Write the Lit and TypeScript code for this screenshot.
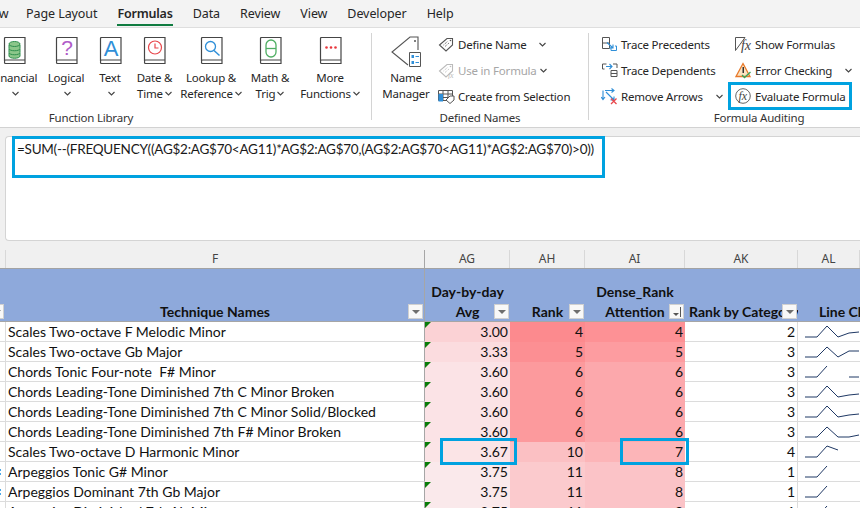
import { LitElement, css, html, svg } from "lit"
import { customElement } from "lit/decorators.js"

const book = (inner: unknown) => html`<svg class="book" width="23" height="29" viewBox="0 0 23 29" fill="none">
  <path d="M1.500 24V1.500q0-1 1-1h19.500v26H2.500q-1 0-1-1.500q0-2 1-2h19.500" stroke="#454545" stroke-width="1.200"/>
  ${inner}
</svg>`

const coins = svg`
  <g fill="#8cc68a" stroke="#2f8f4e" stroke-width="1">
    <path d="M6 16v3c0 3 11 3 11 0v-3z"/>
    <path d="M6 12v3.500c0 3 11 3 11 0V12z"/>
    <path d="M6 8v3.500c0 3 11 3 11 0V8z"/>
    <ellipse cx="11.500" cy="7" rx="5.500" ry="2.500"/>
  </g>`
const question = svg`<text x="12" y="18" font-family="Liberation Sans" font-size="21" fill="#b05cc8" text-anchor="middle">?</text>`
const letterA = svg`<text x="12" y="19" font-family="Liberation Sans" font-size="22" fill="#2f8fd8" text-anchor="middle">A</text>`
const clock = svg`
  <circle cx="12" cy="10.500" r="6.500" stroke="#e8474c" stroke-width="1.200"/>
  <path d="M12 6.500v4.500h3.500" stroke="#e8474c" stroke-width="1.200"/>`
const lens = svg`
  <circle cx="10.500" cy="9.500" r="5" stroke="#2f8fd8" stroke-width="1.300"/>
  <path d="M14 13.500l5.500 5" stroke="#2f8fd8" stroke-width="1.500"/>`
const theta = svg`
  <rect x="7" y="3" width="10" height="17" rx="5" stroke="#4fae63" stroke-width="1.300"/>
  <path d="M7 11.500h10" stroke="#4fae63" stroke-width="1.300"/>`
const dots = svg`
  <circle cx="7.500" cy="10.500" r="1.300" fill="#e8363c"/>
  <circle cx="12" cy="10.500" r="1.300" fill="#e8363c"/>
  <circle cx="16.500" cy="10.500" r="1.300" fill="#e8363c"/>`

const tagIcon = (stroke: string) => svg`
  <path d="M1.500 9L9 2.500h5.500V9L8 15z" stroke="${stroke}" stroke-width="1.100" fill="none"/>
  <path d="M5.500 9l4-3.500M7 10.500l4-3.500" stroke="${stroke}" stroke-width="1" stroke-dasharray="1 1"/>
  <circle cx="12.500" cy="4.500" r=".8" fill="${stroke}"/>`

const icons: Record<string, unknown> = {
  define: tagIcon("#555"),
  use: svg`${tagIcon("#bbb")}<text x="10" y="16" font-family="Liberation Serif" font-style="italic" font-size="8" fill="#bbb">fx</text>`,
  create: svg`
    <path d="M.5 2.500h14v10h-14zM.5 6h14M.5 9.500h14M5 2.500v10M10 2.500v10" stroke="#555" fill="none"/>
    <path d="M.5 6H5v7.500H.5z" fill="#2f8fd8"/>
    <path d="M8 12l4-4h4v4l-4 3.500z" fill="#fff" stroke="#555"/>`,
  precedents: svg`
    <path d="M1.500 1.500h7v11h-7zM1.500 7h7" stroke="#555" fill="none"/>
    <path d="M6 6.500l6 5.500M12 8.500V12H8.500" stroke="#2f8fd8" stroke-width="1.100" fill="none"/>
    <path d="M10 11v3.500h5.500V10H14" stroke="#2f8fd8" fill="none"/>`,
  dependents: svg`
    <path d="M1.500 2h4M1.500 2v5h2" stroke="#555" fill="none"/>
    <path d="M5 4.500h6M8.500 2l2.500 2.500L8.500 7" stroke="#2f8fd8" stroke-width="1.100" fill="none"/>
    <path d="M10 8.500h6v6h-6zM10 11.500h6" stroke="#555" fill="none"/>
    <path d="M12 2h4v4" stroke="#555" fill="none"/>`,
  remove: svg`
    <path d="M2 11V2.500M.2 9l1.800 2.500L4 9M4 2.500h9M10.500 .5L13 2.500l-2.500 2M5 4l8 8M13 8.500V12H9.500" stroke="#2f8fd8" stroke-width="1.100" fill="none"/>
    <path d="M10 10.500l5.500 5.500M15.500 10.500L10 16" stroke="#e8474c" stroke-width="1.300"/>`,
  show: svg`
    <path d="M.5 14.500L10 1.500H.5v13" stroke="#555" fill="none"/>
    <text x="6" y="14" font-family="Liberation Serif" font-style="italic" font-size="14" fill="#444">fx</text>`,
  error: svg`
    <path d="M8 1.500L15 14.500H1z" fill="#fbe3c0" stroke="#e8792b" stroke-width="1.300"/>
    <path d="M7.500 5h1.500v6H7.500z" fill="#333"/>
    <path d="M7 13l2.500 2.500L15.500 10" stroke="#3aa35a" stroke-width="1.300" fill="none"/>`,
  evaluate: svg`
    <circle cx="8" cy="8" r="7.300" stroke="#666" fill="none"/>
    <text x="3.500" y="12" font-family="Liberation Serif" font-style="italic" font-size="12" fill="#444">fx</text>`,
}

const chevron = html`<svg class="chev" width="7" height="5" viewBox="0 0 7 5"><path d="M.5 1L3.500 4l3-3" fill="none" stroke="#444" stroke-width="1.100"/></svg>`

const small = (icon: string, label: string, chev = false, off = false) => html`
  <div class="small ${off ? "off" : ""}">
    <svg class="glyph" width="17" height="17" viewBox="0 0 17 17">${icons[icon]}</svg>
    <span>${label}</span>
    ${chev ? chevron : ""}
  </div>`

const filterBtn = html`<span class="filter"><i></i></span>`

interface Row {
  name: string
  avg: string
  rank: number
  dense: number
  cat: number
  colors: [string, string, string]
  spark: string[]
  dotted?: boolean
}

const up = "8,15 20,15 30,4"
const rows: Row[] = [
  { name: "Scales Two-octave F Melodic Minor", avg: "3.00", rank: 4, dense: 4, cat: 2, colors: ["#fbd2d5", "#fc8a8e", "#fd9195"], spark: ["8,15 20,15 30,4 41,15 52,11 62,10"] },
  { name: "Scales Two-octave Gb Major", avg: "3.33", rank: 5, dense: 5, cat: 3, colors: ["#fbdcdf", "#fc8f93", "#fd9ca0"], spark: ["8,15 20,15 30,5 41,15 52,9 62,9"] },
  { name: "Chords Tonic Four-note  F# Minor", avg: "3.60", rank: 6, dense: 6, cat: 3, colors: ["#fbe3e6", "#fc9a9d", "#fca8ac"], spark: [up, "52,15 62,15"] },
  { name: "Chords Leading-Tone Diminished 7th C Minor Broken", avg: "3.60", rank: 6, dense: 6, cat: 3, colors: ["#fbe3e6", "#fc9a9d", "#fca8ac"], spark: ["8,15 20,15 30,4 41,15 52,13 62,12"] },
  { name: "Chords Leading-Tone Diminished 7th C Minor Solid/Blocked", avg: "3.60", rank: 6, dense: 6, cat: 3, colors: ["#fbe3e6", "#fc9a9d", "#fca8ac"], spark: ["8,15 20,15 30,4 41,15 52,13 62,12"] },
  { name: "Chords Leading-Tone Diminished 7th F# Minor Broken", avg: "3.60", rank: 6, dense: 6, cat: 3, colors: ["#fbe3e6", "#fc9a9d", "#fca8ac"], spark: ["8,15 20,15 30,5 41,15 52,15 62,13"] },
  { name: "Scales Two-octave D Harmonic Minor", avg: "3.67", rank: 10, dense: 7, cat: 4, colors: ["#fbe4e6", "#fbc0c3", "#fcb5b8"], spark: ["8,15 20,15 30,4 41,8"] },
  { name: "Arpeggios Tonic G# Minor", avg: "3.75", rank: 11, dense: 8, cat: 1, colors: ["#fae9eb", "#fbcacd", "#fbc3c7"], spark: [up], dotted: true },
  { name: "Arpeggios Dominant 7th Gb Major", avg: "3.75", rank: 11, dense: 8, cat: 1, colors: ["#fae9eb", "#fbcacd", "#fbc3c7"], spark: [up], dotted: true },
  { name: "Arpeggios Diminished 7th Ab Minor", avg: "3.75", rank: 11, dense: 8, cat: 1, colors: ["#fae9eb", "#fbcacd", "#fbc3c7"], spark: [up] },
]

@customElement("app-root")
export class AppRoot extends LitElement {
  static styles = css`
    :host {
      display: block;
      width: 860px;
      height: 508px;
      overflow: hidden;
      position: relative;
      background: #f0f0f0;
      font-family: "Noto Sans", sans-serif;
      color: #262626;
    }
    .tabs {
      height: 27px;
      display: flex;
      gap: 20px;
      padding-left: 26px;
      background: #f3f3f3;
      font-size: 12.500px;
      letter-spacing: -.08px;
      line-height: 27px;
      border-bottom: 1px solid #dedede;
    }
    .tabs span { white-space: nowrap; }
    .tabs .cut { margin-left: -48px; width: 26px; text-align: right; margin-right: -20px; padding-right: 22px; }
    .tabs .active { font-weight: 600; position: relative; letter-spacing: -.2px; }
    .tabs .active::after {
      content: "";
      position: absolute;
      left: 0;
      right: 0;
      bottom: 1px;
      height: 2px;
      background: #107c41;
    }
    .ribbon {
      height: 99px;
      display: flex;
      background: #fff;
      overflow: hidden;
      border-bottom: 1px solid #d2d2d2;
      font-size: 11.500px;
      letter-spacing: -.2px;
    }
    .group {
      flex: none;
      display: flex;
      flex-direction: column;
      padding-top: 4px;
      box-sizing: border-box;
    }
    .group.lib { width: 562px; margin-left: -190px; margin-right: -1px; }
    .group.names { width: 216px; }
    .group.audit { width: 340px; }
    .body { height: 78px; display: flex; position: relative; }
    .group.lib .body { justify-content: flex-end; }
    .group-label {
      height: 16px;
      line-height: 16px;
      text-align: center;
      color: #333;
      white-space: nowrap;
    }
    .sep { flex: none; width: 1px; margin: 5px 0 7px; background: #d4d4d4; }
    .funcs {
      display: grid;
      grid-template-columns: 53px 50px 38px 51px 62px 56px 64px;
      margin-right: 10px;
    }
    .big {
      display: flex;
      flex-direction: column;
      align-items: center;
      padding-top: 5px;
      line-height: 16px;
      text-align: center;
      white-space: nowrap;
    }
    .big svg.book { margin-bottom: 4px; }
    .big .chev { margin-left: 2px; vertical-align: 2px; }
    .big .alone { height: 16px; }
    .manager { flex: none; width: 64px; margin-left: 2px; padding-top: 3px; }
    .manager svg { margin-bottom: 2px; }
    .col { display: flex; flex-direction: column; margin-top: -1px; }
    .names .col { width: 150px; }
    .audit .col.first { margin-left: 12px; width: 134px; }
    .small {
      height: 26px;
      display: flex;
      align-items: center;
      gap: 3px;
      white-space: nowrap;
    }
    .small .glyph { flex: none; }
    .small.off { color: #a6a6a6; }
    .names .small .chev { margin-left: 9px; }
    .names .small.off .chev { margin-left: 0; }
    .audit .col.first .small .chev { margin: 0 12px 0 auto; }
    .audit .col.second { width: 117px; }
    .audit .col.second .small .chev { margin: 0 0 0 auto; }

    .formula-wrap { padding: 8px 0 0 5px; }
    .formula {
      height: 105px;
      box-sizing: border-box;
      background: #fff;
      border: 1px solid #d4d4d4;
      border-right: 0;
      border-radius: 4px 0 0 4px;
      padding: 3px 0 0 11px;
      font-family: Lato, sans-serif;
      font-size: 13.500px;
      letter-spacing: -.25px;
      line-height: 18px;
      color: #1a1a1a;
      white-space: nowrap;
    }
    .letters {
      margin-top: 9px;
      display: grid;
      grid-template-columns: 6px 419px 85px 75px 100px 113px 62px;
      height: 18px;
      font-size: 12px;
      line-height: 18px;
      text-align: center;
      color: #444;
    }
    .letters span { border-right: 1px solid #d8d8d8; box-sizing: border-box; }
    .letters .mark { border-right-color: #a6a6a6; }
    .sheet {
      display: grid;
      grid-template-columns: 6px 419px 85px 75px 100px 113px 62px;
      grid-template-rows: 54px;
      grid-auto-rows: 20px;
      font-family: Lato, sans-serif;
      font-size: 14px;
      line-height: 19px;
      color: #111;
      background: #fff;
    }
    .head {
      box-sizing: border-box;
      background: #8ea9db;
      border-top: 1px solid #a3a3a3;
      box-shadow: inset 0 -1px #a6a6a6;
      font-weight: 700;
      display: flex;
      flex-direction: column;
      justify-content: flex-end;
      text-align: center;
      white-space: nowrap;
      position: relative;
      overflow: hidden;
      line-height: 20px;
    }
    .head.mark { border-right: 1px solid #a6a6a6; }
    .head.left { text-align: left; padding-left: 4px; }
    .head.line { text-align: left; padding-left: 21px; }
    .filter {
      position: absolute;
      right: 1px;
      bottom: 3px;
      width: 15px;
      height: 15px;
      box-sizing: border-box;
      background: #f8f8f8;
      border: 1px solid #d0d0d0;
      display: flex;
      align-items: center;
      justify-content: center;
    }
    .filter i {
      width: 0;
      height: 0;
      border: 4px solid transparent;
      border-top: 4px solid #6e6e6e;
      border-bottom: 0;
    }
    .filter.sorted { gap: 1px; }
    .filter.sorted i { border-width: 3px 3px 0; border-top-color: #555; margin-top: 5px; }
    .filter.sorted b { width: 1px; height: 10px; background: #555; }
    .filter.edge { left: -11px; right: auto; }
    .cell {
      box-sizing: border-box;
      height: 20px;
      border-bottom: 1px solid #dcdcdc;
      padding: 0 2px;
      white-space: pre;
      overflow: hidden;
      position: relative;
    }
    .cell.lead { padding: 0; border-right: 1px solid #dcdcdc; }
    .cell.lead.dotted::before {
      content: "";
      position: absolute;
      left: 0;
      top: 7px;
      width: 1px;
      height: 6px;
      background: repeating-linear-gradient(#4aa8e8 0 2px, transparent 2px 4px);
    }
    .cell.name { border-right: 1px solid #a6a6a6; }
    .cell.num { text-align: right; }
    .cell.fill { border-bottom: 0; }
    .cell.cat { border-right: 1px solid #dcdcdc; }
    .cell.avg::before {
      content: "";
      position: absolute;
      left: 0;
      top: 0;
      border-top: 6px solid #0a7d0a;
      border-right: 6px solid transparent;
    }
    .cell.spark { padding: 0; }
    .cell.spark svg { display: block; position: absolute; left: -1px; top: 0; }
    .hl {
      position: absolute;
      box-sizing: border-box;
      border: 3px solid #00a2e0;
      pointer-events: none;
    }
    .hl.eval { left: 728px; top: 82px; width: 124px; height: 28px; }
    .hl.bar { left: 12px; top: 136px; width: 593px; height: 42px; }
    .hl.avgbox { left: 440px; top: 438px; width: 77px; height: 27px; }
    .hl.rankbox { left: 620px; top: 438px; width: 69px; height: 27px; }
  `

  render() {
    return html`
      <div class="tabs">
        <span class="cut">Draw</span>
        <span>Page Layout</span>
        <span class="active">Formulas</span>
        <span>Data</span>
        <span>Review</span>
        <span>View</span>
        <span>Developer</span>
        <span>Help</span>
      </div>
      <div class="ribbon">
        <div class="group lib">
          <div class="body">
            <div class="funcs">
              <div class="big">${book(coins)}<span>Financial</span><span class="alone">${chevron}</span></div>
              <div class="big">${book(question)}<span>Logical</span><span class="alone">${chevron}</span></div>
              <div class="big">${book(letterA)}<span>Text</span><span class="alone">${chevron}</span></div>
              <div class="big">${book(clock)}<span>Date &amp;</span><span>Time${chevron}</span></div>
              <div class="big">${book(lens)}<span>Lookup &amp;</span><span>Reference${chevron}</span></div>
              <div class="big">${book(theta)}<span>Math &amp;</span><span>Trig${chevron}</span></div>
              <div class="big">${book(dots)}<span>More</span><span>Functions${chevron}</span></div>
            </div>
          </div>
          <div class="group-label">Function Library</div>
        </div>
        <div class="sep"></div>
        <div class="group names">
          <div class="body">
            <div class="big manager">
              <svg width="32" height="33" viewBox="0 0 32 33" fill="none">
                <path d="M18 30L2 17L20 2h8v13" stroke="#555" stroke-width="1.100"/>
                <circle cx="25" cy="6" r="1" fill="#555"/>
                <path d="M19.500 17.500h11v14h-11z" fill="#fff" stroke="#555"/>
                <path d="M21.500 20h2.500v3h-2.500zM21.500 26h2.500v3h-2.500z" fill="#2f8fd8"/>
                <path d="M25.500 21.500h3.500M25.500 27.500h3.500" stroke="#2f8fd8"/>
              </svg>
              <span>Name</span><span>Manager</span>
            </div>
            <div class="col">
              ${small("define", "Define Name", true)}
              ${small("use", "Use in Formula", true, true)}
              ${small("create", "Create from Selection")}
            </div>
          </div>
          <div class="group-label">Defined Names</div>
        </div>
        <div class="sep"></div>
        <div class="group audit">
          <div class="body">
            <div class="col first">
              ${small("precedents", "Trace Precedents")}
              ${small("dependents", "Trace Dependents")}
              ${small("remove", "Remove Arrows", true)}
            </div>
            <div class="col second">
              ${small("show", "Show Formulas")}
              ${small("error", "Error Checking", true)}
              ${small("evaluate", "Evaluate Formula")}
            </div>
          </div>
          <div class="group-label">Formula Auditing</div>
        </div>
      </div>
      <div class="formula-wrap">
        <div class="formula">=SUM(--(FREQUENCY((AG$2:AG$70&lt;AG11)*AG$2:AG$70,(AG$2:AG$70&lt;AG11)*AG$2:AG$70)&gt;0))</div>
      </div>
      <div class="letters">
        <span></span><span class="mark">F</span><span>AG</span><span>AH</span><span>AI</span><span>AK</span><span>AL</span>
      </div>
      <div class="sheet">
        <div class="head"><span class="filter edge"><i></i></span></div>
        <div class="head mark">Technique Names${filterBtn}</div>
        <div class="head"><span>Day-by-day</span><span>Avg</span>${filterBtn}</div>
        <div class="head">Rank${filterBtn}</div>
        <div class="head"><span>Dense_Rank</span><span>Attention</span><span class="filter sorted"><i></i><b></b></span></div>
        <div class="head left">Rank by Category${filterBtn}</div>
        <div class="head line">Line Chart</div>
        ${rows.map(
          (r) => html`
            <div class="cell lead ${r.dotted ? "dotted" : ""}"></div>
            <div class="cell name">${r.name}</div>
            <div class="cell num fill avg" style="background:${r.colors[0]}">${r.avg}</div>
            <div class="cell num fill" style="background:${r.colors[1]}">${r.rank}</div>
            <div class="cell num fill" style="background:${r.colors[2]}">${r.dense}</div>
            <div class="cell num cat">${r.cat}</div>
            <div class="cell spark">
              <svg width="64" height="20" fill="none" stroke="#1f3864" stroke-width="1">
                ${r.spark.map((p) => svg`<polyline points="${p}"/>`)}
              </svg>
            </div>
          `
        )}
      </div>
      <div class="hl eval"></div>
      <div class="hl bar"></div>
      <div class="hl avgbox"></div>
      <div class="hl rankbox"></div>
    `
  }
}
